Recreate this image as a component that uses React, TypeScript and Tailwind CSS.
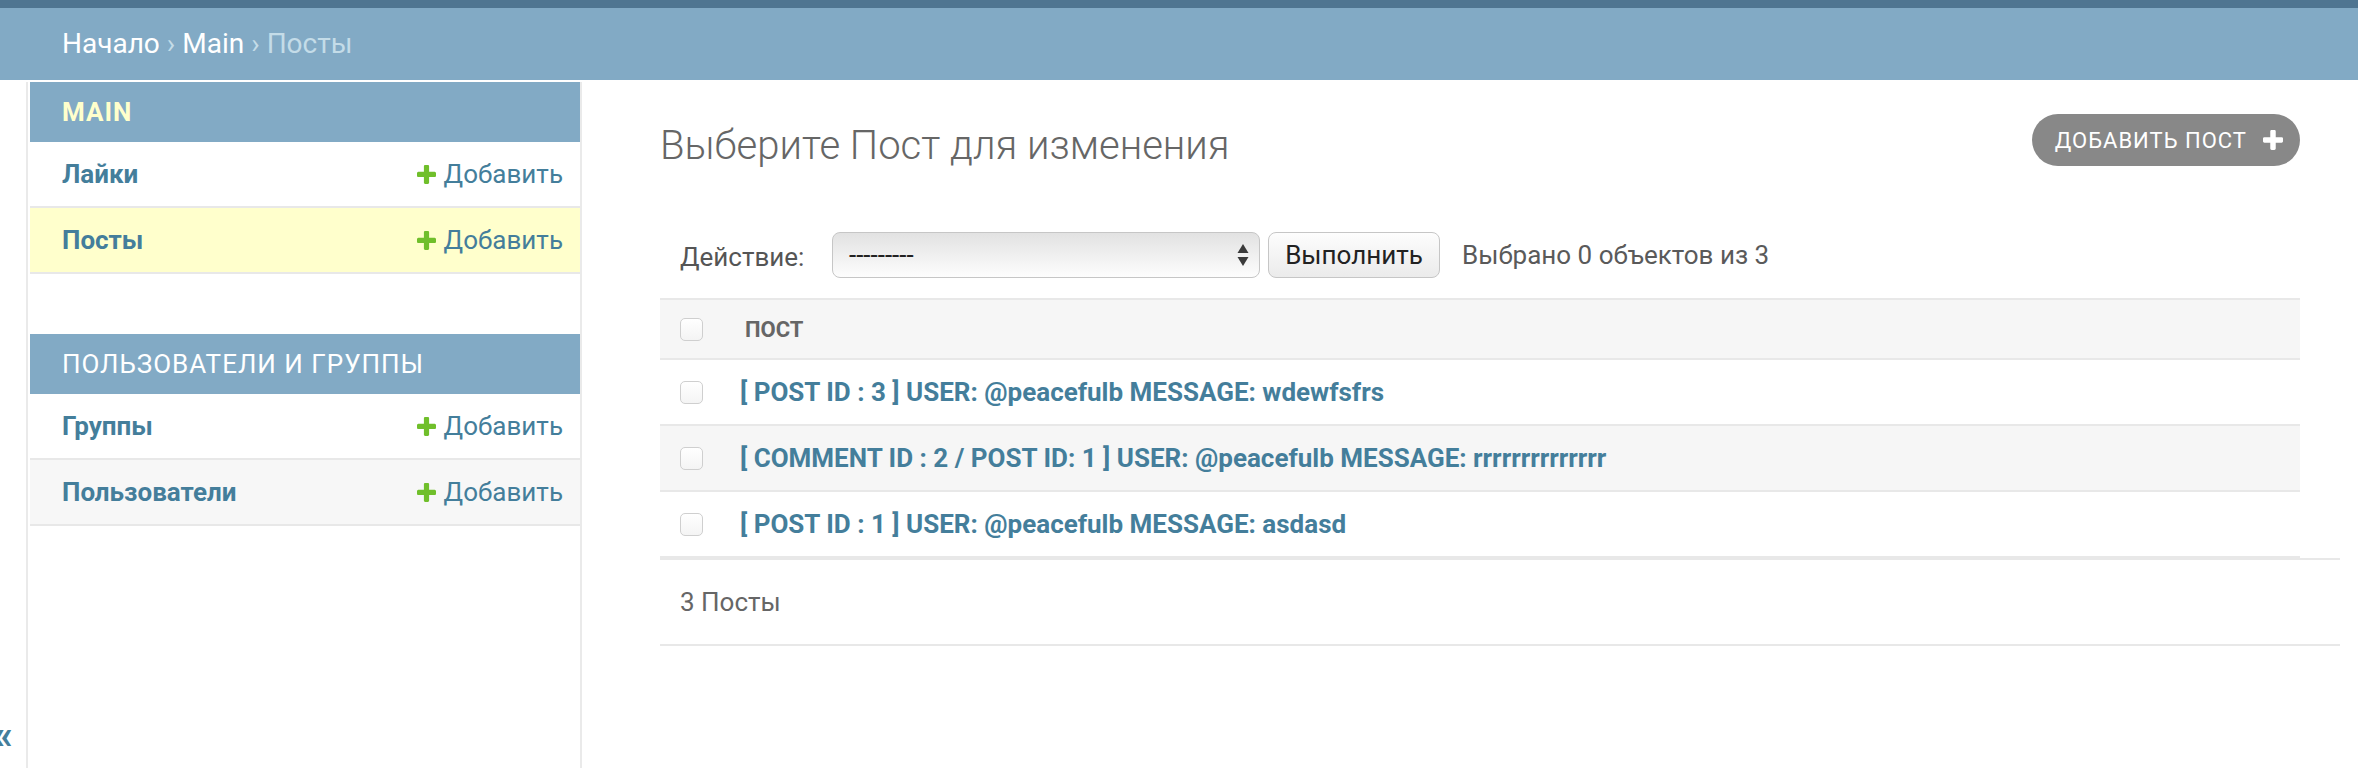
import React from 'react'

const font = { fontFamily: 'Roboto, "Noto Sans", sans-serif' }

function PlusIcon({ className = '' }: { className?: string }) {
  return (
    <svg viewBox="192 192 1408 1408" className={className} fill="currentColor">
      <path d="M1600 796v192q0 40-28 68t-68 28h-416v416q0 40-28 68t-68 28h-192q-40 0-68-28t-28-68v-416h-416q-40 0-68-28t-28-68v-192q0-40 28-68t68-28h416v-416q0-40 28-68t68-28h192q40 0 68 28t28 68v416h416q40 0 68 28t28 68z" />
    </svg>
  )
}

function SelectArrows() {
  return (
    <svg viewBox="0 0 12 24" className="w-[12px] h-[24px]" fill="#3a3a3a">
      <path d="M6 1 L11.5 10 L0.5 10 Z" />
      <path d="M6 23 L11.5 14 L0.5 14 Z" />
    </svg>
  )
}

function Checkbox() {
  return <span className="block w-[23px] h-[23px] rounded-[5px] border border-[#cfcfcf] bg-linear-to-b from-white to-[#f4f4f4]" />
}

interface ModelRow { name: string; bg?: string }

function SidebarModule({ title, current, rows }: { title: string; current?: boolean; rows: ModelRow[] }) {
  return (
    <div className="mb-[60px]">
      <div
        className={`h-[60px] flex items-center pl-[32px] bg-[#82aac5] text-[26px] tracking-[1px] uppercase ${
          current ? 'font-bold text-[#ffffcc]' : 'text-white'
        }`}
      >
        {title}
      </div>
      {rows.map(r => (
        <div
          key={r.name}
          className={`h-[66px] border-b-2 border-[#e8e8e8] flex items-center justify-between pl-[32px] pr-[17px] ${r.bg ?? 'bg-white'}`}
        >
          <span className="text-[26px] font-bold text-[#447e9b]">{r.name}</span>
          <span className="flex items-center gap-[8px] text-[26px] text-[#447e9b]">
            <PlusIcon className="w-[19px] h-[19px] text-[#70bf2b]" />
            Добавить
          </span>
        </div>
      ))}
    </div>
  )
}

const results = [
  '[ POST ID : 3 ] USER: @peacefulb MESSAGE: wdewfsfrs',
  '[ COMMENT ID : 2 / POST ID: 1 ] USER: @peacefulb MESSAGE: rrrrrrrrrrrrrr',
  '[ POST ID : 1 ] USER: @peacefulb MESSAGE: asdasd',
]

export default function App() {
  return (
    <div className="w-[2358px] h-[768px] overflow-hidden bg-white text-[#333]" style={font}>
      <div className="h-[8px] bg-[#4f7591]" />
      <div className="h-[72px] bg-[#82aac5] flex items-center pl-[62px] text-[28px] text-[#c4dce8]">
        <span className="text-white">Начало</span>
        <span className="mx-[7px]">›</span>
        <span className="text-white">Main</span>
        <span className="mx-[7px]">›</span>
        <span>Посты</span>
      </div>

      <div className="flex h-[688px]">
        <div className="w-[28px] mt-[2px] border-r-2 border-[#eaeaea] flex flex-col justify-end pb-[12px] overflow-hidden">
          <span className="-ml-[7px] text-[40px] leading-none font-bold text-[#447e9b]">«</span>
        </div>
        <nav className="w-[552px] ml-[2px] mt-[2px] border-r-2 border-[#eaeaea]">
          <SidebarModule
            title="Main"
            current
            rows={[{ name: 'Лайки' }, { name: 'Посты', bg: 'bg-[#ffffcc]' }]}
          />
          <SidebarModule
            title="Пользователи и группы"
            rows={[{ name: 'Группы' }, { name: 'Пользователи', bg: 'bg-[#f7f7f7]' }]}
          />
        </nav>

        <main className="pl-[78px]">
          <div className="w-[1680px]">
            <div className="w-[1640px] h-[86px] pt-[34px] flex items-start justify-between">
              <h1 className="mt-[8px] text-[40px] leading-[48px] font-light text-[#666]">Выберите Пост для изменения</h1>
              <a className="h-[52px] rounded-full bg-[#888] text-white text-[22px] tracking-[1px] uppercase flex items-center pl-[23px] pr-[17px] gap-[16px]">
                Добавить пост
                <PlusIcon className="w-[20px] h-[20px] text-white" />
              </a>
            </div>

            <div className="w-[1640px] mt-[66px] h-[46px] flex items-center pl-[20px] text-[26px]">
              <span className="w-[152px] text-[#555] pt-[4px]">Действие:</span>
              <div className="w-[428px] h-[46px] rounded-[8px] border border-[#c6c6c6] bg-linear-to-b from-[#e2e2e2] to-[#fdfdfd] flex items-center justify-between pl-[16px] pr-[10px] text-[26px] text-[#222]">
                <span>---------</span>
                <SelectArrows />
              </div>
              <button className="ml-[8px] w-[172px] h-[46px] rounded-[8px] border border-[#c6c6c6] bg-linear-to-b from-[#fdfdfd] to-[#ebebeb] text-[26px] text-[#222]">
                Выполнить
              </button>
              <span className="ml-[22px] text-[#5a5a5a]">Выбрано 0 объектов из 3</span>
            </div>

            <div className="w-[1640px] mt-[20px] border-t-2 border-[#e8e8e8]">
              <div className="h-[60px] bg-[#f6f6f6] border-b-2 border-[#e8e8e8] flex items-center">
                <div className="w-[80px] pl-[20px]"><Checkbox /></div>
                <span className="pl-[5px] text-[22px] font-bold uppercase text-[#666]">Пост</span>
              </div>
              {results.map((r, i) => (
                <div
                  key={r}
                  className={`h-[66px] border-b-2 border-[#e8e8e8] flex items-center ${i === 1 ? 'bg-[#f6f6f6]' : 'bg-white'}`}
                >
                  <div className="w-[80px] pl-[20px]"><Checkbox /></div>
                  <a className="text-[26px] font-bold text-[#447e9b]">{r}</a>
                </div>
              ))}
            </div>

            <div className="h-[88px] border-t-2 border-b-2 border-[#e8e8e8] flex items-center pl-[20px] text-[26px] text-[#666]">
              3 Посты
            </div>
          </div>
        </main>
      </div>
    </div>
  )
}
